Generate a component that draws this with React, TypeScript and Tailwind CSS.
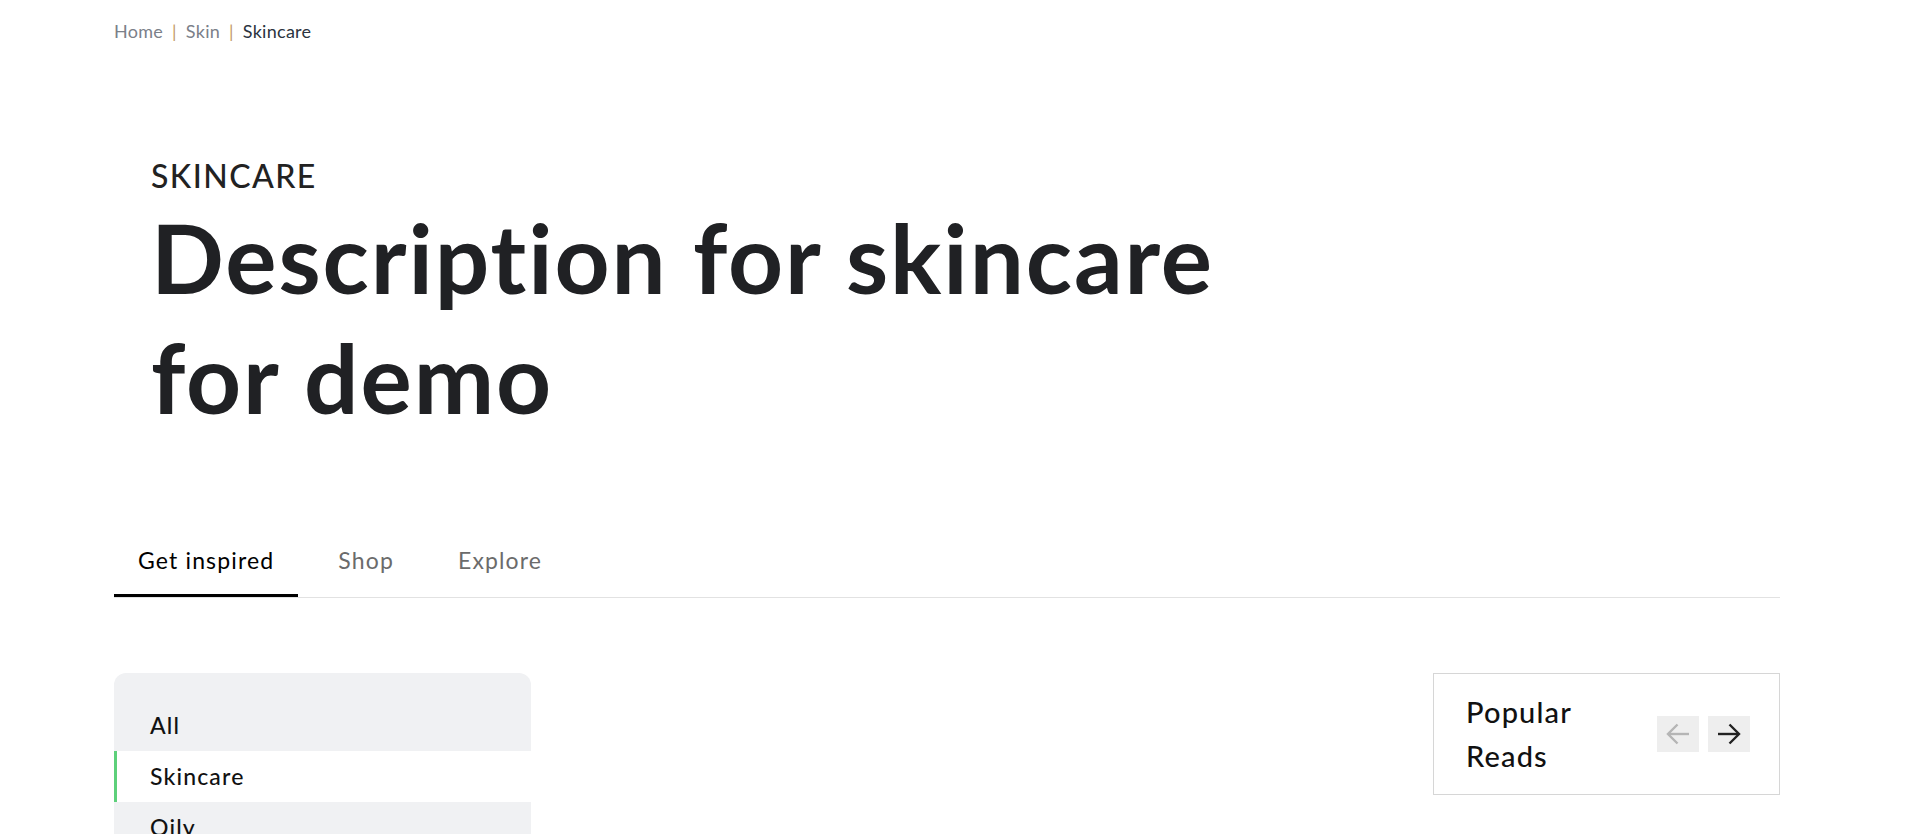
import React, { useState } from 'react';

const crumbs = ['Home', 'Skin', 'Skincare'];
const tabs = ['Get inspired', 'Shop', 'Explore'];
const categories = ['All', 'Skincare', 'Oily', 'Dry', 'Combination', 'Sensitive', 'Acne-prone', 'Anti-ageing'];

const Arrow: React.FC<{ dir: 'left' | 'right'; color: string }> = ({ dir, color }) => (
  <svg
    width="24"
    height="22"
    viewBox="0 0 24 22"
    fill="none"
    stroke={color}
    strokeWidth="2.4"
    className={dir === 'left' ? 'rotate-180' : ''}
  >
    <path d="M1 11h20.5" />
    <path d="M12.5 1.5 22 11l-9.5 9.5" />
  </svg>
);

export default function App() {
  const [activeTab, setActiveTab] = useState(0);
  const [activeCat, setActiveCat] = useState(1);

  return (
    <div className="min-h-[3770px] bg-white font-['Lato',sans-serif] text-[#202124]">
      <div className="pl-[114px] pr-[140px]">
        {/* breadcrumb */}
        <nav className="flex items-center pt-[19px] text-[18px] leading-[24px] tracking-[0.015em]">
          {crumbs.map((c, i) => (
            <React.Fragment key={c}>
              {i > 0 && <span className="mx-[9px] text-[#c39766]">|</span>}
              <a
                href="#"
                className={i === crumbs.length - 1 ? 'text-[#2b3440]' : 'text-[#7b8089]'}
              >
                {c}
              </a>
            </React.Fragment>
          ))}
        </nav>

        {/* hero */}
        <header className="pl-[37px] pt-[113px]">
          <p className="text-[32px] leading-[40px] font-medium tracking-[0.045em] text-[#222]">SKINCARE</p>
          <h1 className="mt-px max-w-[1120px] text-[96px] leading-[120px] font-bold tracking-[0.02em] text-[#202124]">
            Description for skincare for demo
          </h1>
        </header>

        {/* tabs */}
        <div className="mt-[97px] flex gap-4 border-b border-[#e2e2e2]">
          {tabs.map((t, i) => (
            <button
              key={t}
              onClick={() => setActiveTab(i)}
              className={
                'px-6 pt-[12px] pb-[20px] text-[23px] leading-[28px] tracking-[0.05em] border-b-[3px] ' +
                (i === activeTab ? 'border-black text-black' : 'border-transparent text-[#6b6b6b]')
              }
            >
              {t}
            </button>
          ))}
        </div>

        {/* content */}
        <div className="mt-[75px] flex items-start justify-between">
          <aside className="w-[417px] rounded-[12px] bg-[#f0f1f3] pt-[27px] pb-6">
            <ul>
              {categories.map((c, i) => (
                <li
                  key={c}
                  onClick={() => setActiveCat(i)}
                  className={
                    'flex h-[51px] cursor-pointer items-center pl-[36px] text-[23px] font-medium tracking-[0.05em] text-[#111] ' +
                    (i === activeCat ? 'bg-white shadow-[inset_3px_0_0_#5dd07a]' : '')
                  }
                >
                  {c}
                </li>
              ))}
            </ul>
          </aside>

          <section className="flex w-[347px] items-center justify-between border border-[#d6d6d6] py-4 pl-8 pr-[29px]">
            <h2 className="w-[150px] text-[29px] leading-[44px] font-medium tracking-[0.04em] text-[#111]">Popular Reads</h2>
            <div className="flex gap-[9px]">
              <button className="flex h-[36px] w-[42px] items-center justify-center bg-[#eeeeee]">
                <Arrow dir="left" color="#b5b5b5" />
              </button>
              <button className="flex h-[36px] w-[42px] items-center justify-center bg-[#eeeeee]">
                <Arrow dir="right" color="#222" />
              </button>
            </div>
          </section>
        </div>
      </div>
    </div>
  );
}
